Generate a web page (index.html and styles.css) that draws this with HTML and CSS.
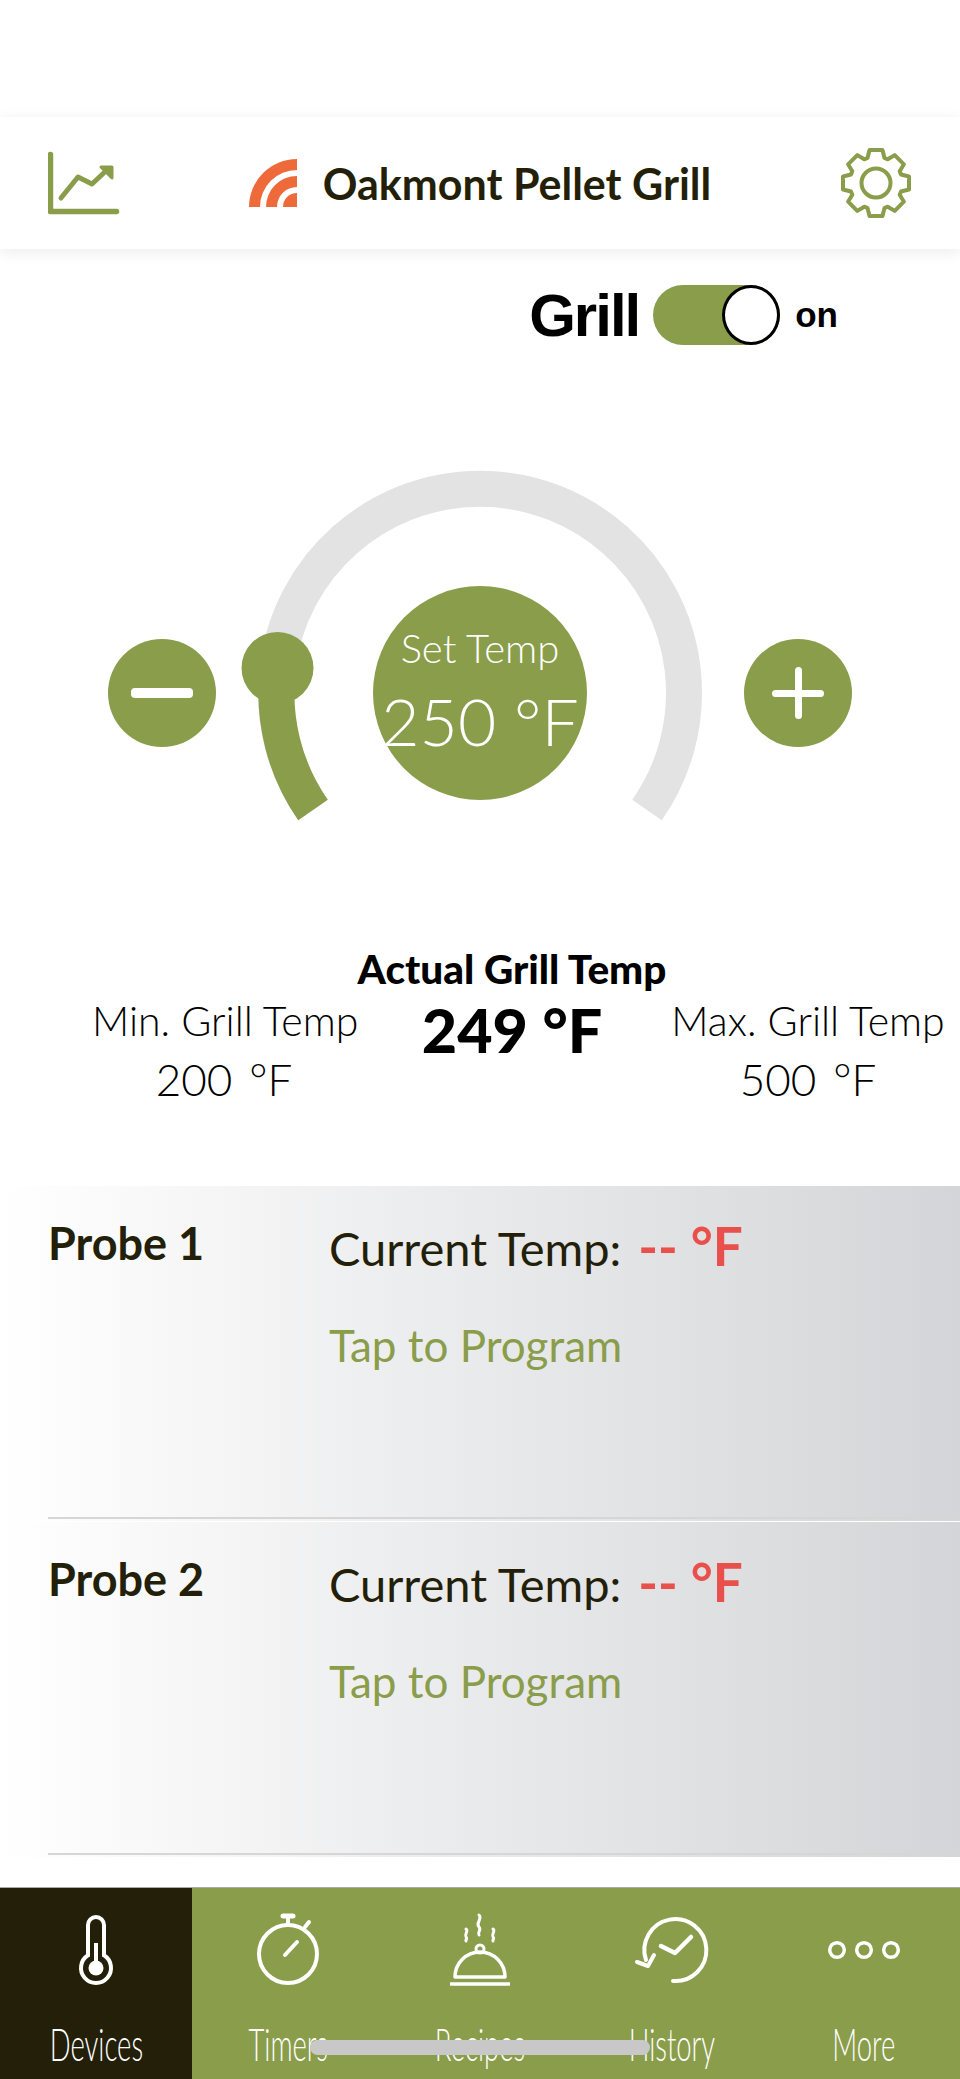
FILE: index.html
```html
<!DOCTYPE html>
<html lang="en">

<head>
    <meta charset="UTF-8">
    <title>Oakmont Pellet Grill</title>
    <link rel="stylesheet" href="styles.css">
</head>

<body>
    <div id="screen">

        <header class="topbar">
            <svg class="chart-icon" width="72" height="66" viewBox="0 0 72 66">
                <path d="M2.5 4.5V61.5H68.5" fill="none" stroke="#8a9d4b" stroke-width="5.5" stroke-linecap="round" stroke-linejoin="round" />
                <path d="M13 48L30 27L44 34L60 19" fill="none" stroke="#8a9d4b" stroke-width="5" stroke-linecap="round" stroke-linejoin="round" />
                <path d="M53 17H64V28Z" fill="#8a9d4b" stroke="#8a9d4b" stroke-width="3" stroke-linejoin="round" />
            </svg>
            <div class="title">
                <svg class="logo" width="48" height="48" viewBox="0 0 48 48">
                    <path d="M0 48A48 48 0 0 1 48 0V11A37 37 0 0 0 11 48Z" fill="#ee6a3a" />
                    <path d="M17 48A31 31 0 0 1 48 17V28A20 20 0 0 0 28 48Z" fill="#ee6a3a" />
                    <path d="M34 48A14 14 0 0 1 48 34V48Z" fill="#ee6a3a" />
                </svg>
                <span>Oakmont Pellet Grill</span>
            </div>
            <svg class="gear-icon" width="72" height="72" viewBox="0 0 72 72">
                <path d="M27.5 11L29.5 3H42.5L44.5 11L47.7 12.3L54.7 8.1L63.9 17.3L59.7 24.3L61 27.5L69 29.5V42.5L61 44.5L59.7 47.7L63.9 54.7L54.7 63.9L47.7 59.7L44.5 61L42.5 69H29.5L27.5 61L24.3 59.7L17.3 63.9L8.1 54.7L12.3 47.7L11 44.5L3 42.5V29.5L11 27.5L12.3 24.3L8.1 17.3L17.3 8.1L24.3 12.3Z" fill="none" stroke="#8a9d4b" stroke-width="4" stroke-linejoin="round" />
                <circle cx="36" cy="36" r="14.5" fill="none" stroke="#8a9d4b" stroke-width="4" />
            </svg>
        </header>

        <div class="power-row">
            <span class="power-label">Grill</span>
            <div class="toggle"><div class="knob"></div></div>
            <span class="power-state">on</span>
        </div>

        <div class="dial-row">
            <button class="round-btn"><span class="minus"></span></button>
            <div class="dial">
                <svg class="dial-arc" width="444" height="352" viewBox="0 0 444 352">
                    <path d="M55 339A204 204 0 1 1 389 339" fill="none" stroke="#e3e3e3" stroke-width="36" />
                    <path d="M55 339A204 204 0 0 1 20 197" fill="none" stroke="#8a9d4b" stroke-width="36" />
                    <circle cx="19.5" cy="197" r="36" fill="#8a9d4b" />
                </svg>
                <div class="set-temp">
                    <span class="set-label">Set Temp</span>
                    <span class="set-value">250 °F</span>
                </div>
            </div>
            <button class="round-btn"><span class="plus"></span></button>
        </div>

        <div class="actual-label">Actual Grill Temp</div>
        <div class="stats">
            <div class="stat">
                <div>Min. Grill Temp</div>
                <div class="stat-value">200 °F</div>
            </div>
            <div class="actual-value">249 °F</div>
            <div class="stat">
                <div>Max. Grill Temp</div>
                <div class="stat-value">500 °F</div>
            </div>
        </div>

        <div class="probes">
            <div class="probe-row">
                <div class="probe">
                    <div class="probe-name">Probe 1</div>
                    <div class="probe-info">
                        <div class="probe-temp">Current Temp: <span class="no-reading">-- °F</span></div>
                        <div class="probe-link">Tap to Program</div>
                    </div>
                </div>
            </div>
            <div class="probe-row">
                <div class="probe">
                    <div class="probe-name">Probe 2</div>
                    <div class="probe-info">
                        <div class="probe-temp">Current Temp: <span class="no-reading">-- °F</span></div>
                        <div class="probe-link">Tap to Program</div>
                    </div>
                </div>
            </div>
        </div>

        <nav class="tabbar">
            <div class="tab active">
                <svg width="72" height="76" viewBox="0 0 72 76" fill="none" stroke="#fff" stroke-width="4">
                    <path d="M28 43.3V13A8 8 0 0 1 44 13V43.3A15 15 0 1 1 28 43.3Z" />
                    <path d="M36 31V56" />
                    <circle cx="36" cy="56" r="7.5" fill="#fff" stroke="none" />
                </svg>
                <span>Devices</span>
            </div>
            <div class="tab">
                <svg width="72" height="76" viewBox="0 0 72 76" fill="none" stroke="#fff" stroke-width="4" stroke-linecap="round">
                    <circle cx="36" cy="42" r="29" />
                    <path d="M36 13V5" />
                    <path d="M31 4H41" stroke-width="5" />
                    <path d="M53 15L57 10" />
                    <path d="M33 43L45 30" />
                </svg>
                <span>Timers</span>
            </div>
            <div class="tab">
                <svg width="72" height="76" viewBox="0 0 72 76" fill="none" stroke="#fff" stroke-width="3.5" stroke-linecap="round">
                    <path d="M11 65A25 25 0 0 1 61 65Z" stroke-linejoin="round" />
                    <path d="M6 72H66" stroke-linecap="butt" />
                    <circle cx="36" cy="37" r="4" stroke-width="3" />
                    <path d="M35 3C39 7 31 11 35 15C38 18 33 20 35 23" stroke-width="3" />
                    <path d="M22 17C25 19 20 22 22 25C24 27 21 28 22 29" stroke-width="3" />
                    <path d="M49 17C52 19 47 22 49 25C51 27 48 28 49 29" stroke-width="3" />
                </svg>
                <span>Recipes</span>
            </div>
            <div class="tab">
                <svg width="72" height="76" viewBox="0 0 72 76" fill="none" stroke="#fff" stroke-width="4" stroke-linecap="round" stroke-linejoin="round">
                    <path d="M37 69A31 31 0 1 0 10 48" />
                    <path d="M1 50L12 54L18 43" />
                    <path d="M25 34L39 41L55 25" stroke-width="4.5" />
                </svg>
                <span>History</span>
            </div>
            <div class="tab">
                <svg width="72" height="76" viewBox="0 0 72 76" fill="none" stroke="#fff" stroke-width="3.5">
                    <circle cx="9" cy="38" r="7.3" />
                    <circle cx="36" cy="38" r="7.3" />
                    <circle cx="63" cy="38" r="7.3" />
                </svg>
                <span>More</span>
            </div>
        </nav>

        <div class="home-bar"></div>
    </div>
</body>

</html>
```

FILE: styles.css
```css
* {
    margin: 0;
    padding: 0;
    box-sizing: border-box;
}

body {
    font-family: Lato, "Open Sans", sans-serif;
    color: #231f08;
    background: #fff;
}

#screen {
    position: relative;
    display: flex;
    flex-direction: column;
    width: 960px;
    height: 2079px;
    overflow: hidden;
}

.topbar {
    display: flex;
    align-items: center;
    justify-content: space-between;
    height: 132px;
    margin-top: 117px;
    padding: 0 48px;
    box-shadow: 0 3px 14px rgba(0, 0, 0, 0.08);
}

.title {
    display: flex;
    align-items: center;
    gap: 26px;
    font-size: 43px;
    font-weight: 700;
}

.logo {
    display: block;
}

.power-row {
    display: flex;
    align-items: center;
    justify-content: flex-end;
    height: 60px;
    margin-top: 36px;
    padding-right: 122px;
    font-family: "Liberation Sans", sans-serif;
    font-weight: 700;
    color: #000;
}

.power-label {
    font-size: 60px;
    letter-spacing: -2px;
    margin-right: 14px;
}

.power-state {
    font-size: 35px;
    margin-left: 15px;
}

.toggle {
    display: flex;
    justify-content: flex-end;
    width: 127px;
    height: 60px;
    border-radius: 30px;
    background: #8a9d4b;
}

.knob {
    width: 58px;
    height: 60px;
    border: 3px solid #000;
    border-radius: 50%;
    background: #fff;
}

.dial-row {
    display: flex;
    justify-content: center;
    gap: 42px;
    margin-top: 126px;
}

.round-btn {
    display: flex;
    align-items: center;
    justify-content: center;
    width: 108px;
    height: 108px;
    margin-top: 168px;
    border: none;
    border-radius: 50%;
    background: #8a9d4b;
}

.minus {
    width: 62px;
    height: 10px;
    border-radius: 4px;
    background: #fff;
}

.plus {
    position: relative;
    width: 52px;
    height: 52px;
}

.plus::before,
.plus::after {
    content: "";
    position: absolute;
    border-radius: 4px;
    background: #fff;
}

.plus::before {
    left: 0;
    top: 22.5px;
    width: 52px;
    height: 7px;
}

.plus::after {
    left: 22.5px;
    top: 0;
    width: 7px;
    height: 52px;
}

.dial {
    position: relative;
    width: 444px;
    height: 352px;
}

.dial-arc {
    display: block;
    overflow: visible;
}

.set-temp {
    position: absolute;
    left: 115px;
    top: 115px;
    display: flex;
    flex-direction: column;
    align-items: center;
    width: 214px;
    height: 214px;
    padding-top: 37px;
    border-radius: 50%;
    background: #8a9d4b;
    color: #fff;
    font-weight: 300;
    white-space: nowrap;
}

.set-label {
    font-size: 40px;
    line-height: 50px;
}

.set-value {
    margin-top: 8px;
    font-size: 66px;
    line-height: 80px;
}

.actual-label {
    margin-top: 124px;
    padding-left: 64px;
    font-size: 40.5px;
    font-weight: 900;
    line-height: 44px;
    text-align: center;
    color: #000;
}

.stats {
    display: grid;
    grid-template-columns: 264px 272px 280px;
    column-gap: 20px;
    padding-left: 92px;
    font-size: 41px;
    font-weight: 300;
    color: #000;
}

.stat {
    line-height: 59px;
    text-align: center;
    white-space: nowrap;
}

.stat-value {
    font-size: 44px;
    word-spacing: 5px;
}

.actual-value {
    font-size: 61px;
    font-weight: 900;
    line-height: 78px;
    text-align: center;
}

.probes {
    display: flex;
    flex-direction: column;
    gap: 1px;
    margin-top: 77px;
}

.probe-row {
    height: 335px;
    padding: 0 0 2px 48px;
    background: linear-gradient(to right, #fff 0%, #d4d5d8 100%);
}

.probe {
    display: flex;
    height: 100%;
    padding-top: 28px;
    border-bottom: 2px solid #d6d6d6;
}

.probe-name {
    width: 281px;
    font-size: 45px;
    font-weight: 700;
    line-height: 58px;
}

.probe-info {
    display: flex;
    flex-direction: column;
}

.probe-temp {
    height: 64px;
    font-size: 47px;
    font-weight: 400;
    line-height: 64px;
}

.no-reading {
    margin-left: 5px;
    font-size: 53px;
    font-weight: 700;
    color: #e9504c;
}

.probe-link {
    margin-top: 41px;
    font-size: 44px;
    line-height: 52px;
    color: #8a9d4b;
}

.tabbar {
    display: flex;
    height: 192px;
    margin-top: auto;
    border-top: 1px solid #aaa;
    background: #8a9d4b;
    color: #fff;
}

.tab {
    display: flex;
    flex: 1;
    flex-direction: column;
    align-items: center;
    padding-top: 24px;
}

.tab.active {
    background: #231f08;
}

.tab svg {
    display: block;
    overflow: visible;
}

.tab span {
    margin-top: 31px;
    font-size: 45px;
    font-weight: 300;
    line-height: 50px;
    transform: scaleX(0.61);
}

.home-bar {
    position: absolute;
    left: 310px;
    top: 2040px;
    width: 340px;
    height: 15px;
    border-radius: 8px;
    background: #c8c8c8;
}
```
